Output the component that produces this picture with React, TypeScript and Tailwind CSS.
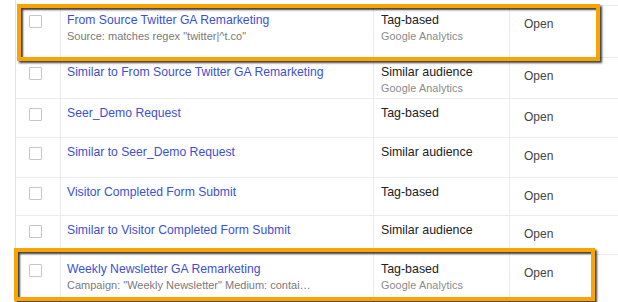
const rows = [
  {
    name: "From Source Twitter GA Remarketing",
    sub: 'Source: matches regex "twitter|^t.co"',
    type: "Tag-based",
    typeSub: "Google Analytics",
    h: "h-[52px]",
  },
  {
    name: "Similar to From Source Twitter GA Remarketing",
    type: "Similar audience",
    typeSub: "Google Analytics",
    h: "h-[41px]",
  },
  { name: "Seer_Demo Request", type: "Tag-based", h: "h-[39px]" },
  { name: "Similar to Seer_Demo Request", type: "Similar audience", h: "h-[40px]" },
  { name: "Visitor Completed Form Submit", type: "Tag-based", h: "h-[38px]" },
  { name: "Similar to Visitor Completed Form Submit", type: "Similar audience", h: "h-[39px]" },
  {
    name: "Weekly Newsletter GA Remarketing",
    sub: 'Campaign: "Weekly Newsletter" Medium: contai…',
    type: "Tag-based",
    typeSub: "Google Analytics",
    h: "h-[48px]",
  },
];

function Row({ row }: { row: (typeof rows)[number] }) {
  return (
    <div className={`flex border-b border-[#ebebeb] ${row.h}`}>
      {/* checkbox */}
      <div className="w-[45px] shrink-0 border-r border-[#ebebeb] pt-[9px] pl-[13px]">
        <div className="h-[13px] w-[13px] rounded-[1px] border border-[#c6c6c6] bg-white" />
      </div>
      {/* name */}
      <div className="w-[313px] shrink-0 border-r border-[#ebebeb] pt-[6px] pl-[6px]">
        <div className="text-[12.2px] leading-[17px] whitespace-nowrap text-[#3d4fd2]">{row.name}</div>
        {row.sub && (
          <div className="text-[11px] leading-[14px] whitespace-nowrap text-[#7a7a7a]">{row.sub}</div>
        )}
      </div>
      {/* type */}
      <div className="w-[136px] shrink-0 border-r border-[#ebebeb] pt-[6px] pl-[7px]">
        <div className="text-[12.4px] leading-[17px] text-[#222]">{row.type}</div>
        {row.typeSub && (
          <div className="text-[10.8px] leading-[14px] tracking-[0.1px] text-[#8a8a8a]">
            {row.typeSub}
          </div>
        )}
      </div>
      {/* status */}
      <div className="flex-1 pt-[10px] pl-[14px]">
        <div className="text-[12px] leading-[17px] text-[#444]">Open</div>
      </div>
    </div>
  );
}

export default function App() {
  return (
    <div
      className="relative h-[302px] w-[618px] overflow-hidden bg-white"
      style={{ fontFamily: '"Liberation Sans", Arial, sans-serif' }}
    >
      <div className="ml-[15px] h-full border-l border-[#e3e3e3] pt-[5px]">
        <div className="border-t border-[#ebebeb]">
          {rows.map((row) => (
            <Row key={row.name} row={row} />
          ))}
        </div>
      </div>

      {/* Highlight boxes */}
      <div className="pointer-events-none absolute top-[4px] left-[17px] h-[57px] w-[583px] border-4 border-[#f9a400] shadow-[2px_2px_2px_rgba(0,0,0,0.75),inset_2px_2px_2px_rgba(0,0,0,0.75)]" />
      <div className="pointer-events-none absolute top-[248px] left-[14px] h-[53px] w-[581px] border-4 border-[#f9a400] shadow-[2px_2px_2px_rgba(0,0,0,0.75),inset_2px_2px_2px_rgba(0,0,0,0.75)]" />
    </div>
  );
}
